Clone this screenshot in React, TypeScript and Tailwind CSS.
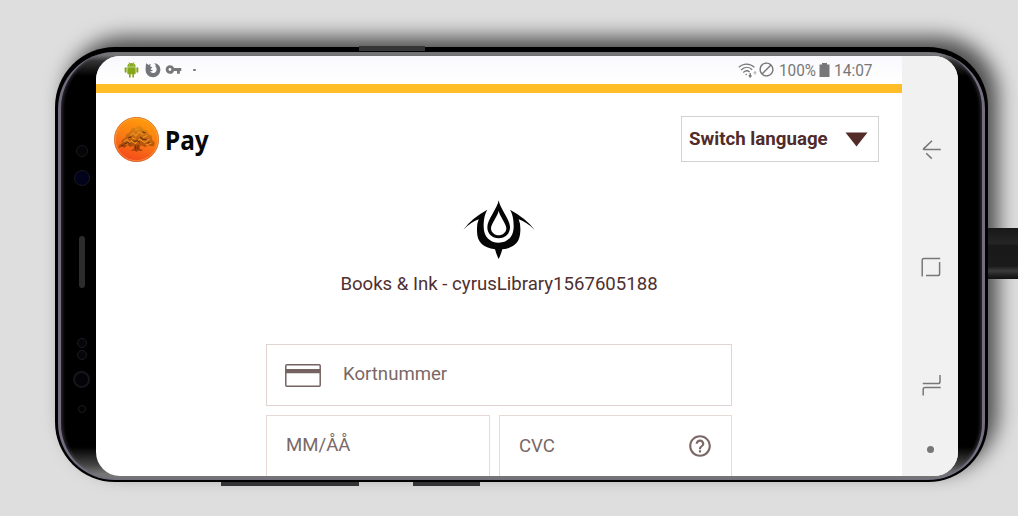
import React from "react";
import { MdVpnKey, MdBlock, MdHelpOutline } from "react-icons/md";

function StatusBar() {
  return (
    <div className="flex h-7 shrink-0 items-center bg-gradient-to-b from-[#f9f9fd] to-white pl-[28px] pr-[29px] text-[#777]">
      <svg width="15" height="16" viewBox="0 0 45 48" fill="#86a61c">
        <path d="M10 14C10 8 14 5 16 4L13 0L14.5 0L18 3.5Q22.5 2 27 3.5L30.5 0L32 0L29 4C31 5 35 8 35 14Z" />
        <path d="M10 16H35V34Q35 37 32 37H30V44Q30 47 27.5 47Q25 47 25 44V37H20V44Q20 47 17.5 47Q15 47 15 44V37H13Q10 37 10 34Z" />
        <rect x="2" y="16" width="6" height="16" rx="3" />
        <rect x="37" y="16" width="6" height="16" rx="3" />
        <circle cx="17" cy="9" r="1.3" fill="#fff" />
        <circle cx="28" cy="9" r="1.3" fill="#fff" />
      </svg>
      <svg className="ml-[6px]" width="16" height="16" viewBox="0 0 16 16">
        <path
          d="M1.2 1.2 L3.6 3 C4.2 2.4 5 2.2 5.8 2.5 L5.1 4.1 C5.4 5 6.4 5.1 7.4 5.2 C7.1 6.1 5.7 6.3 5.6 7.2 C6.1 8 7 8 7.9 7.7 C7.4 9.2 5.9 9.5 5 9 C6 11.3 9.4 11.6 11 9.4 C12.3 7.4 11.5 5.3 10.2 4.2 L10.9 3.7 C10.6 2.5 9.8 1.8 9 1.2 C13 1.2 15.6 4.3 15.4 8 C15.1 12.4 11.9 15.2 8 15.2 C3.7 15.2.6 12 .6 8 C.6 5.5.8 3 1.2 1.2Z"
          fill="#747578"
        />
      </svg>
      <MdVpnKey className="ml-[4px] -mt-px size-[17px]" />
      <span className="ml-[11px] size-[2.5px] rounded-full bg-[#777]" />
      <svg className="ml-auto" width="19" height="15" viewBox="0 0 19 15" fill="none" stroke="#777" strokeWidth="1.3">
        <path d="M.8 4.4C5.2-.1 12-.1 16.4 4.4M3 7C6.6 3.6 11 3.6 14.2 6.8M5.3 9.4C7.7 7.3 9.7 7.3 11.6 9" />
        <path d="M7 11.2Q8.2 10.2 9.3 11.1L8.3 12.3Z" fill="#777" stroke="none" />
        <path d="M12.2 10V14M10.8 12.4L12.2 14L13.5 12.4" />
        <path d="M17 11.6V8.8M15.7 10.2L17 8.8L18.2 10.2" stroke="#bbb" />
      </svg>
      <MdBlock className="-mt-0.5 ml-px size-[17px]" />
      <span className="ml-[4px] w-[38px] whitespace-nowrap">
        <span className="inline-block origin-left scale-x-[0.9] text-[17px] leading-7">100%</span>
      </span>
      <svg className="ml-[2px] -mt-px" width="11" height="14" viewBox="0 0 11 14">
        <path d="M3 0H8V1.5H10.5V14H.5V1.5H3Z" fill="#777" />
      </svg>
      <span className="ml-[4px] w-[39px] whitespace-nowrap">
        <span className="inline-block origin-left scale-x-[0.91] text-[17px] leading-7">14:07</span>
      </span>
    </div>
  );
}

function Coin() {
  return (
    <svg width="45" height="45" viewBox="0 0 132 132">
      <defs>
        <linearGradient id="coin" x1="0.65" y1="0" x2="0.35" y2="1">
          <stop offset="0" stopColor="#ff9c0a" />
          <stop offset="0.5" stopColor="#fa7a14" />
          <stop offset="1" stopColor="#f4471c" />
        </linearGradient>
        <linearGradient id="leaf" x1="0.6" y1="0" x2="0.4" y2="1">
          <stop offset="0" stopColor="#e58a12" />
          <stop offset="1" stopColor="#a33a09" />
        </linearGradient>
      </defs>
      <circle cx="66" cy="66" r="65" fill="url(#coin)" stroke="#c85a14" strokeWidth="2" />
      <circle cx="66" cy="66" r="62" fill="none" stroke="#ffb45c" strokeWidth="1.5" />
      <path
        d="M12 92L17 80L22 79L23 68L33 61L37 50L47 44L53 31L64 33L71 25L82 29L87 37L97 40L101 50L112 56L111 66L120 75L117 85L107 86L101 82L91 89L81 83L75 87L77 94L86 98L77 100L69 98L67 103L60 99L48 99L58 93L57 84L48 88L39 83L31 91L23 87Z"
        fill="url(#leaf)"
      />
      <path
        d="M28 73L38 66L44 72M47 54L57 47L64 56L73 43L84 51M36 81L51 70L63 78L75 65L90 75L104 64M62 39L72 35M85 60L98 54M53 61L64 65M93 82L110 76"
        fill="none"
        stroke="#ed9726"
        strokeWidth="3"
      />
      <path
        d="M30 79L42 75L48 80M57 71L69 70L77 75M42 61L52 58M76 58L85 66L96 65M83 43L92 47M63 84L64 96M71 82L69 95M21 84L29 82M98 77L105 75"
        fill="none"
        stroke="#67300e"
        strokeWidth="3"
      />
    </svg>
  );
}

function Emblem() {
  return (
    <svg width="72" height="60" viewBox="70 60 216 180" fill="#050505">
      <path
        fillRule="evenodd"
        d="M177 61C180 84 211 118 211 142C211 162 196 175 177 175C158 175 143 162 143 142C143 118 174 84 177 61ZM177 92C174 109 154 131 154 145C154 158 165 166 177 166C189 166 200 158 200 145C200 131 180 109 177 92Z"
      />
      <path d="M71 149Q95 115 143 89C135 103 132 118 132 140C132 170 151 188 177 188C203 188 222 170 222 140C222 118 219 103 211 89Q259 115 285 149Q261 127 237 118Q243 132 242 153C241 187 224 203 188 208Q184 223 177 237Q170 223 166 208C130 203 112 187 112 153Q111 132 117 118Q93 127 71 149Z" />
    </svg>
  );
}

function Header() {
  return (
    <header className="flex items-start justify-between pl-[18px] pr-[23px] pt-[23px]">
      <div className="flex items-center">
        <Coin />
        <span className="ml-[6px] mt-0.5 origin-left scale-x-[0.92] font-['Noto_Sans',sans-serif] text-[26.5px] font-bold leading-[44px] text-[#080808]">
          Pay
        </span>
      </div>
      <button className="flex h-[46px] w-[198px] items-center border border-[#d2d2d2] pl-[7px] text-[18.7px] font-bold text-[#502b2a]">
        <span className="w-[156px] whitespace-nowrap text-left">Switch language</span>
        <svg width="23" height="15" viewBox="0 0 23 15">
          <path d="M.5.5H22.5L11.5 14.5Z" fill="#532c2a" />
        </svg>
      </button>
    </header>
  );
}

function CardForm() {
  return (
    <form className="ml-[170px] flex w-[466px] flex-col gap-[9px] text-[18.6px] text-[#7a6866]">
      <div className="flex h-[62px] items-center border-[1.5px] border-[#e0d3d2] pl-[18px]">
        <svg width="36" height="23" viewBox="0 0 36 23">
          <rect x="0.8" y="0.8" width="34.4" height="21.4" rx="1" fill="none" stroke="#756361" strokeWidth="1.5" />
          <path d="M.8 5H35.2V9.2H.8Z" fill="#756361" />
        </svg>
        <span className="ml-[22px] -mt-px">Kortnummer</span>
      </div>
      <div className="flex gap-[9px]">
        <div className="h-[70px] w-[224px] border-[1.5px] border-[#e6d9d6] pl-[19px] leading-[59px]">MM/ÅÅ</div>
        <div className="flex h-[70px] w-[233px] items-start justify-between border-[1.5px] border-[#e6d9d6] pl-[19px] pr-[18px] pt-[17px]">
          <span className="leading-[26px]">CVC</span>
          <MdHelpOutline className="size-[26px]" />
        </div>
      </div>
    </form>
  );
}

function NavBar() {
  return (
    <nav className="flex w-14 shrink-0 flex-col items-center bg-[#f1f1f1] pt-[84px]">
      <svg className="ml-[3px]" width="20" height="20" viewBox="0 0 20 20" fill="none" stroke="#777" strokeWidth="1.5">
        <path d="M10 .8L1.8 8.6Q1 9.5 2 9.5H18.8M4.2 13.2L9.8 18.6" />
      </svg>
      <svg className="ml-[2px] mt-[97px]" width="20" height="20" viewBox="0 0 20 20" fill="none" stroke="#777" strokeWidth="1.5">
        <path d="M1.2 19.5V3Q1.2 1.5 3 1.5H19.2M18.6 5V16.8Q18.6 18.6 16.8 18.6H5" />
      </svg>
      <svg className="ml-[3px] mt-[98px]" width="20" height="21" viewBox="0 0 20 21" fill="none" stroke="#777" strokeWidth="1.5">
        <path d="M.8 8.5H16.2Q18 8.5 18 6.4V0M1.2 20.5V14.5Q1.2 12.5 3 12.5H18.7" />
      </svg>
      <span className="mt-[50px] size-[7px] rounded-full bg-[#777]" />
    </nav>
  );
}

function Sensors() {
  return (
    <div className="flex w-[35px] shrink-0 flex-col items-center pl-[6px] pt-[93px]">
      <span className="size-3 rounded-full border border-[#17181b] bg-[#050507]" />
      <span className="mt-[13px] size-4 rounded-full border border-[#17191f] bg-[#02031a]" />
      <span className="mt-[50px] h-[52px] w-1.5 rounded-sm bg-[#2c2c2d]" />
      <span className="mt-[50px] size-2.5 rounded-full border border-[#1a1c20] bg-[#060609]" />
      <span className="mt-0.5 size-2.5 rounded-full border border-[#1a1c20] bg-[#060609]" />
      <span className="mt-[11px] size-[17px] rounded-full border-2 border-[#14171b] bg-[#040408]" />
      <span className="mt-[17px] size-2 rounded-full border border-[#1a1c20]" />
    </div>
  );
}

export default function App() {
  return (
    <div className="relative h-[516px] w-[1018px] overflow-hidden bg-[#dedede] pl-[55px] pt-[47px] font-['Roboto',sans-serif]">
      <div className="absolute left-[221px] top-[480px] h-1.5 w-[138px] bg-[#38373a]" />
      <div className="absolute left-[413px] top-[480px] h-1.5 w-[67px] bg-[#38373a]" />

      <div className="relative h-[434.5px] w-[932.5px] rounded-[60px] bg-black px-[3px] pb-[2px] pt-[5px] shadow-[10px_-10px_20px_0px_rgba(0,0,0,0.65)]">
        <div className="absolute -top-[1.5px] left-[304px] h-[5px] w-[66px] bg-[#353535]" />
        <div className="absolute left-[933px] top-[181px] h-[51px] w-[30px] bg-[linear-gradient(#181818,#252525_30%,#191919_35%,#1b1b1b_75%,#3b3b3b_84%,#202020_93%,#111)]" />
        <div className="flex h-full rounded-[57px] border-x-[3px] border-b border-[#746d80] bg-[linear-gradient(#777_0px,#777_3px,#333_9px,#000_24px,#000_395px,#444_413px,#777_422px)] shadow-[inset_2px_0_3px_rgba(110,105,125,0.35),inset_-2px_0_3px_rgba(110,105,125,0.35)]">
          <Sensors />
          <div className="mt-1 flex h-[420px] w-[862px] shrink-0 overflow-hidden rounded-[24px] bg-white">
            <main className="w-[806px] shrink-0">
              <StatusBar />
              <div className="h-[9px] bg-[#ffbd27]" />
              <Header />
              <div className="flex flex-col items-center pt-[38px]">
                <Emblem />
                <p className="mt-[11px] h-[73px] whitespace-nowrap text-[18.6px] leading-[26px] text-[#502f30]">
                  Books &amp; Ink - cyrusLibrary1567605188
                </p>
              </div>
              <CardForm />
            </main>
            <NavBar />
          </div>
        </div>
      </div>
    </div>
  );
}
